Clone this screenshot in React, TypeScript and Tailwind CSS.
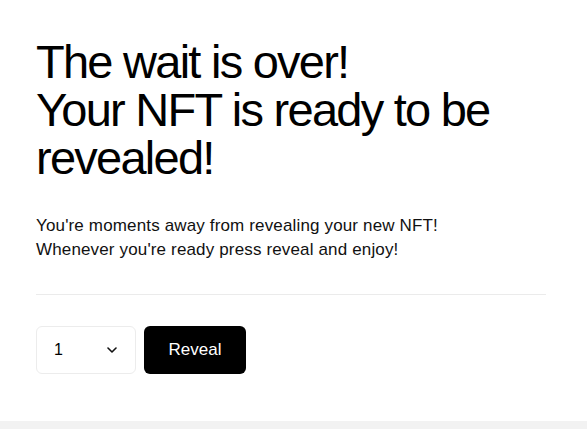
import React from 'react';

const App: React.FC = () => {
  return (
    <div className="min-h-screen bg-white" style={{ fontFamily: '"Liberation Sans", Arial, sans-serif' }}>
      <main className="px-9 pt-[38px] pb-[47px] bg-white">
        <h1 className="text-[47px] leading-[48px] tracking-[-1.75px] text-black font-normal">
          The wait is over!
          <br />
          Your NFT is ready to be
          <br />
          revealed!
        </h1>
        <p className="mt-[32px] text-[17px] leading-6 tracking-[0.15px] text-[#111]">
          You're moments away from revealing your new NFT!
          <br />
          Whenever you're ready press reveal and enjoy!
        </p>
        <div className="mt-[32px] w-[510px] border-t border-[#ebebeb]" />
        <div className="mt-[31px] flex items-center gap-2">
          <div className="w-[100px] h-12 border border-[#ececec] rounded-md flex items-center justify-between pl-[17px] pr-[18px]">
            <span className="text-[16px] text-black">1</span>
            <svg width="10" height="6" viewBox="0 0 10 6" fill="none" stroke="#111" strokeWidth="1.6" strokeLinecap="round" strokeLinejoin="round">
              <path d="M1 1l4 4 4-4" />
            </svg>
          </div>
          <button className="w-[102px] h-12 bg-black text-white rounded-md text-[17px]">Reveal</button>
        </div>
      </main>
      <div className="h-[10px] bg-[#f2f2f2]" />
    </div>
  );
};

export default App;
